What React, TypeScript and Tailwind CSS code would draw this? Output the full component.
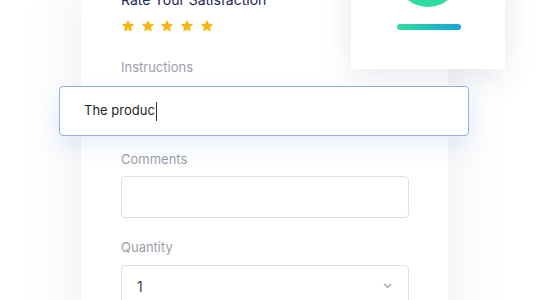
import React from "react";

const Star = () => (
  <svg width="14" height="14" viewBox="0 0 24 24" className="block">
    <path
      d="M12 1.5l3.2 6.7 7.3.9-5.4 5.1 1.4 7.3L12 17.9l-6.5 3.6 1.4-7.3-5.4-5.1 7.3-.9z"
      fill="#f6b70f"
    />
  </svg>
);

export default function App() {
  return (
    <div
      className="relative w-[556px] h-[300px] overflow-hidden bg-white"
      style={{ fontFamily: "Inter, 'Noto Sans', sans-serif" }}
    >
      {/* main form card */}
      <div className="absolute left-[81px] top-[-30px] w-[367px] h-[360px] bg-white shadow-[0_10px_60px_rgba(40,50,100,0.09)]">
        <div className="pl-[40px] pr-[39px] flex flex-col">
          <div className="mt-[20px] text-[14px] leading-[20px] text-[#1d2756]">Rate Your Satisfaction</div>
          <div className="mt-[9px] flex gap-[5.7px]">
            <Star />
            <Star />
            <Star />
            <Star />
            <Star />
          </div>
          <div className="mt-[24px] text-[13px] leading-[20px] text-[#9a9ea9]">Instructions</div>
          <div className="mt-[15px] h-[48px]" />
          <div className="mt-[9px] text-[13px] leading-[20px] text-[#9a9ea9]">Comments</div>
          <div className="mt-[7px] h-[42px] rounded-[4px] border border-[#dedfe3]" />
          <div className="mt-[19px] text-[13px] leading-[20px] text-[#9a9ea9]">Quantity</div>
          <div className="mt-[8px] h-[42px] rounded-[4px] border border-[#dedfe3] flex items-center justify-between pl-[15px] pr-[16px]">
            <span className="text-[14px] text-[#3a3d4a]">1</span>
            <svg width="9" height="6" viewBox="0 0 9 6" className="block">
              <path d="M1 1l3.5 3.5L8 1" stroke="#9a9ea9" strokeWidth="1.2" fill="none" />
            </svg>
          </div>
        </div>
      </div>

      {/* floating results card */}
      <div className="absolute left-[351px] top-[-40px] w-[154px] h-[109px] bg-white shadow-[0_8px_30px_rgba(40,50,100,0.10)] overflow-hidden">
        <div className="absolute left-[45px] top-[-17px] w-[64px] h-[64px] rounded-full bg-[#2ddc9f]" />
        <div className="absolute left-[46px] top-[64px] w-[64px] h-[6px] rounded-full bg-gradient-to-r from-[#33dc9c] to-[#1aa3d8]" />
      </div>

      {/* floating focused input */}
      <div className="absolute left-[59px] top-[86px] w-[410px] h-[50px] bg-white rounded-[4px] border border-[#8fb2ea] shadow-[0_10px_22px_rgba(110,160,235,0.16)] flex items-center pl-[24px]">
        <span className="text-[13px] text-[#1d1f26]">The produc</span>
        <span className="ml-[1px] w-[1.5px] h-[19px] bg-[#333]" />
      </div>
    </div>
  );
}
